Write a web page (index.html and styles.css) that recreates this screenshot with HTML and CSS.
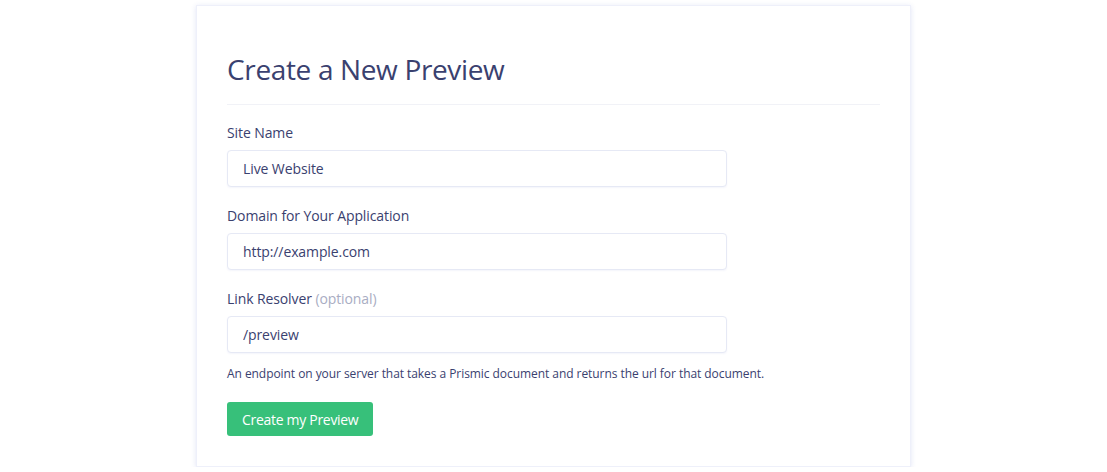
FILE: index.html
```html
<!DOCTYPE html>
<html>
<head>
    <title>Create a New Preview</title>
    <link rel="stylesheet" href="styles.css">
</head>
<body>
    <div class="card">
        <h1>Create a New Preview</h1>
        <hr class="divider">
        <div class="form-group">
            <label for="site_name">Site Name</label>
            <input type="text" id="site_name" value="Live Website">
        </div>
        <div class="form-group">
            <label for="domain">Domain for Your Application</label>
            <input type="text" id="domain" value="http://example.com">
        </div>
        <div class="form-group">
            <label for="resolver">Link Resolver <span class="optional">(optional)</span></label>
            <input type="text" id="resolver" value="/preview">
            <p class="help">An endpoint on your server that takes a Prismic document and returns the url for that document.</p>
        </div>
        <button>Create my Preview</button>
    </div>
</body>
</html>
```

FILE: styles.css
```css
body {
    margin: 0;
    background: #fff;
    font-family: "Open Sans", "Noto Sans", sans-serif;
    color: #3a416f;
}

.card {
    width: 653px;
    margin: 5px auto 0;
    padding: 46px 30px 30px;
    background: #fff;
    border: 1px solid #eef0fa;
    box-shadow: 0 1px 5px rgba(70, 90, 190, 0.16);
}

h1 {
    margin: 0;
    font-size: 28px;
    line-height: 34px;
    font-weight: 400;
    letter-spacing: -0.35px;
    color: #3a416f;
}

.divider {
    margin: 18px 0 18px;
    border: none;
    border-top: 1px solid #f1f2f7;
}

.form-group {
    margin-bottom: 19px;
}

label {
    display: block;
    margin-bottom: 7px;
    font-size: 14px;
    line-height: 20px;
    letter-spacing: -0.1px;
    color: #3a416f;
}

.optional {
    color: #a9adc3;
}

input {
    display: block;
    width: 500px;
    height: 37px;
    box-sizing: border-box;
    padding: 0 15px;
    border: 1px solid #e6e9f5;
    border-radius: 4px;
    box-shadow: 0 1px 2px rgba(70, 90, 190, 0.06);
    font-family: inherit;
    font-size: 14px;
    letter-spacing: -0.1px;
    color: #3a416f;
}

.help {
    margin: 12px 0 0;
    font-size: 12px;
    line-height: 18px;
    letter-spacing: -0.06px;
    color: #3a416f;
}

button {
    display: block;
    height: 34px;
    padding: 0 15px;
    border: none;
    border-radius: 3px;
    background: #37c07a;
    color: #fff;
    font-family: inherit;
    font-size: 14px;
    letter-spacing: -0.3px;
    cursor: pointer;
}
```
